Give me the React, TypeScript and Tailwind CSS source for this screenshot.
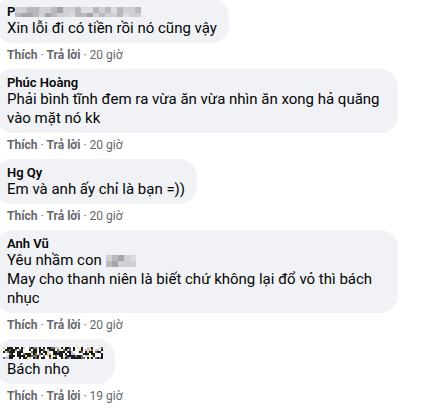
import type { ReactNode } from 'react'

const FONT = "font-['Roboto','Noto_Sans',sans-serif]"

function Mosaic({ w, h, cell, seed, dark }: { w: number; h: number; cell: number; seed: number; dark?: boolean }) {
  // cheap pseudo-random mosaic standing in for the blurred-out names
  const rects = []
  let s = seed
  for (let y = 0; y < h; y += cell) {
    for (let x = 0; x < w; x += cell) {
      s = (s * 9301 + 49297) % 233280
      const r = s / 233280
      const shade = dark
        ? r < 0.4 ? '#1c1c1c' : r < 0.55 ? '#6f6f6f' : r < 0.62 ? '#c9c0e0' : r < 0.68 ? '#e6d98a' : '#ffffff'
        : r < 0.3 ? '#b9b9bd' : r < 0.6 ? '#cfd0d4' : r < 0.85 ? '#dcdde1' : '#a5a6ab'
      rects.push(<rect key={x + '-' + y} x={x} y={y} width={cell} height={cell} fill={shade} />)
    }
  }
  return (
    <svg width={w} height={h} className="block">
      {rects}
    </svg>
  )
}

function Comment({ name, children, time, width }: { name: ReactNode; children: ReactNode; time: string; width?: string }) {
  return (
    <div className="flex flex-col items-start">
      <div className={`bg-[#f0f2f5] rounded-[18px] pl-3 pr-3 pt-[7px] pb-[5px] ${width ?? ''}`}>
        <div className="h-[14px] flex items-center text-[13px] leading-[14px] font-semibold text-[#050505]">{name}</div>
        <div className="text-[15px] leading-[19px] text-[#050505]">{children}</div>
      </div>
      <div className="pl-3 pt-1 pb-[6px] text-[12px] leading-4 text-[#65676b]">
        <span className="font-bold">Thích</span> · <span className="font-bold">Trả lời</span> · {time}
      </div>
    </div>
  )
}

export default function App() {
  return (
    <div className={`w-[427px] h-[412px] overflow-hidden bg-white ${FONT}`}>
      <div className="-ml-[5px] -mt-[2px] flex flex-col">
        <Comment
          name={
            <>
              <span>P</span>
              <Mosaic w={126} h={10} cell={6} seed={7} />
            </>
          }
          time="20 giờ"
        >
          Xin lỗi đi có tiền rồi nó cũng vậy
        </Comment>
        <Comment name="Phúc Hoàng" time="20 giờ" width="w-[403px]">
          Phải bình tĩnh đem ra vừa ăn vừa nhìn ăn xong hả quăng vào mặt nó kk
        </Comment>
        <Comment name="Hg Qy" time="20 giờ">
          Em và anh ấy chỉ là bạn =))
        </Comment>
        <Comment name="Anh Vũ" time="20 giờ" width="w-[403px]">
          <div className="flex items-center gap-1">
            Yêu nhầm con <Mosaic w={30} h={12} cell={6} seed={3} />
          </div>
          <div>May cho thanh niên là biết chứ không lại đổ vỏ thì bách nhục</div>
        </Comment>
        <Comment
          name={
            <div className="-ml-1">
              <Mosaic w={100} h={12} cell={2} seed={11} dark />
            </div>
          }
          time="19 giờ"
        >
          Bách nhọ
        </Comment>
      </div>
    </div>
  )
}
